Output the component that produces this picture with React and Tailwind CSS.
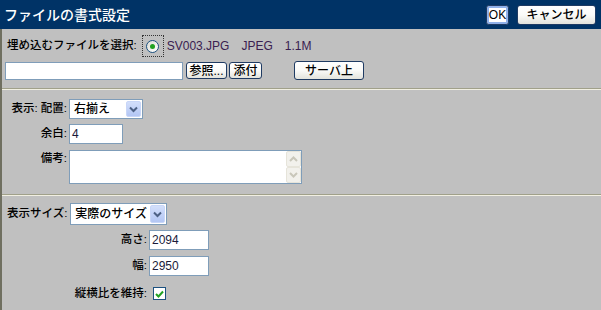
import React from 'react';

const font = { fontFamily: '"Liberation Sans", "Noto Sans CJK JP", sans-serif' };

// XP-style push button
const Btn = ({ children, className = '' }) => (
  <button
    className={`flex items-center justify-center rounded-[3px] border border-[#1f3b63] bg-gradient-to-b from-white via-[#fafaf8] to-[#e3e3dc] text-[12px] leading-none text-black ${className}`}
  >
    {children}
  </button>
);

const Chevron = () => (
  <svg width="9" height="7" viewBox="0 0 9 7">
    <path d="M1 1.5 L4.5 5 L8 1.5" fill="none" stroke="#4d6185" strokeWidth="2" />
  </svg>
);

const Select = ({ value, className = '' }) => (
  <div className={`flex items-center border border-[#7f9db9] bg-white ${className}`}>
    <span className="flex-1 pl-[4px] text-[12px] leading-none">{value}</span>
    <span className="mr-[1px] flex h-[calc(100%-2px)] w-[15px] items-center justify-center rounded-[2px] border border-[#c8d6f8] bg-gradient-to-b from-[#d3dffb] to-[#b3c6f4]">
      <Chevron />
    </span>
  </div>
);

const Input = ({ value = '', className = '' }) => (
  <div className={`flex items-center border border-[#7f9db9] bg-white pl-[2px] text-[12px] leading-none text-[#1a1a3a] ${className}`}>
    {value}
  </div>
);

const Separator = () => (
  <div>
    <div className="h-px bg-[#a0a08a]" />
    <div className="h-px bg-[#f1efe2]" />
  </div>
);

const ScrollBtn = ({ up }) => (
  <div className="flex h-[16px] w-[15px] items-center justify-center rounded-[2px] border border-[#e6e4da] bg-[#f2f1ec]">
    <svg width="9" height="6" viewBox="0 0 9 6">
      <path d={up ? 'M1 5 L4.5 1.5 L8 5' : 'M1 1 L4.5 4.5 L8 1'} fill="none" stroke="#c9c7ba" strokeWidth="2" />
    </svg>
  </div>
);

export default function App() {
  return (
    <div style={font} className="h-[310px] w-[601px] overflow-hidden bg-[#c0c0c0] text-[12px] font-medium text-black">
      {/* title bar */}
      <div className="flex h-[29px] items-center justify-between bg-[#003366] pl-[4px] pr-[5px]">
        <span className="text-[14px] leading-none text-white">ファイルの書式設定</span>
        <div className="flex items-center gap-[8px]">
          <button className="flex h-[20px] w-[23px] items-center justify-center rounded-[3px] border border-[#1f3b63] bg-white text-[12px] leading-none shadow-[inset_0_0_0_2px_#8fb1ea]">
            OK
          </button>
          <Btn className="h-[20px] w-[79px]">キャンセル</Btn>
        </div>
      </div>

      <div className="h-[281px] border-l-2 border-[#6f6f60]">
        {/* embed file */}
        <div className="pt-[6px]">
          <div className="flex h-[22px] items-center">
            <span className="ml-[5px] text-[11.5px]">埋め込むファイルを選択:</span>
            <div className="ml-[5px] flex h-[22px] w-[22px] items-center justify-center border border-dotted border-[#333]">
              <span className="flex h-[13px] w-[13px] items-center justify-center rounded-full border border-[#1c5180] bg-gradient-to-br from-[#dcdcd4] to-white">
                <span className="h-[5px] w-[5px] rounded-full bg-[#21a121]" />
              </span>
            </div>
            <span className="ml-[3px] text-[12px] text-[#3a2050]">SV003.JPG</span>
            <span className="ml-[12px] text-[12px] text-[#3a2050]">JPEG</span>
            <span className="ml-[12px] text-[12px] text-[#3a2050]">1.1M</span>
          </div>
          <div className="mt-[4px] flex items-center">
            <Input className="ml-[3px] h-[18px] w-[178px]" />
            <Btn className="ml-[3px] h-[17px] w-[41px] text-[11.5px]">参照...</Btn>
            <Btn className="ml-[2px] h-[17px] w-[33px]">添付</Btn>
            <Btn className="ml-[32px] h-[19px] w-[70px]">サーバ上</Btn>
          </div>
        </div>
        <div className="mt-[8px]">
          <Separator />
        </div>

        {/* display / placement */}
        <div className="grid grid-cols-[65px_auto] items-center gap-x-[2px] pt-[9px]">
          <span className="text-right text-[11.5px]">表示: 配置:</span>
          <Select value="右揃え" className="h-[20px] w-[74px]" />
          <span className="mt-[5px] text-right text-[11.5px]">余白:</span>
          <Input value="4" className="mt-[5px] h-[20px] w-[54px]" />
          <span className="mt-[6px] self-start text-right text-[11.5px]">備考:</span>
          <div className="mt-[6px] flex h-[34px] w-[233px] justify-end border border-[#7f9db9] bg-white">
            <div className="flex flex-col">
              <ScrollBtn up />
              <ScrollBtn />
            </div>
          </div>
        </div>
        <div className="mt-[10px]">
          <Separator />
        </div>

        {/* display size */}
        <div className="pt-[7px]">
          <div className="flex items-center">
            <span className="ml-[5px] text-[11.5px]">表示サイズ:</span>
            <Select value="実際のサイズ" className="ml-[3px] h-[22px] w-[97px]" />
          </div>
          <div className="mt-[5px] grid grid-cols-[145px_auto] items-center gap-x-[2px] gap-y-[6px]">
            <span className="text-right text-[11.5px]">高さ:</span>
            <Input value="2094" className="h-[20px] w-[60px]" />
            <span className="text-right text-[11.5px]">幅:</span>
            <Input value="2950" className="h-[20px] w-[60px]" />
            <span className="mt-[3px] text-right text-[11.5px]">縦横比を維持:</span>
            <div className="mt-[3px] ml-[4px] flex h-[13px] w-[13px] items-center justify-center border border-[#1c5180] bg-white">
              <svg width="9" height="8" viewBox="0 0 9 8">
                <path d="M1 4 L3.5 6.5 L8 1.5" fill="none" stroke="#21a121" strokeWidth="2" />
              </svg>
            </div>
          </div>
        </div>
      </div>
    </div>
  );
}
